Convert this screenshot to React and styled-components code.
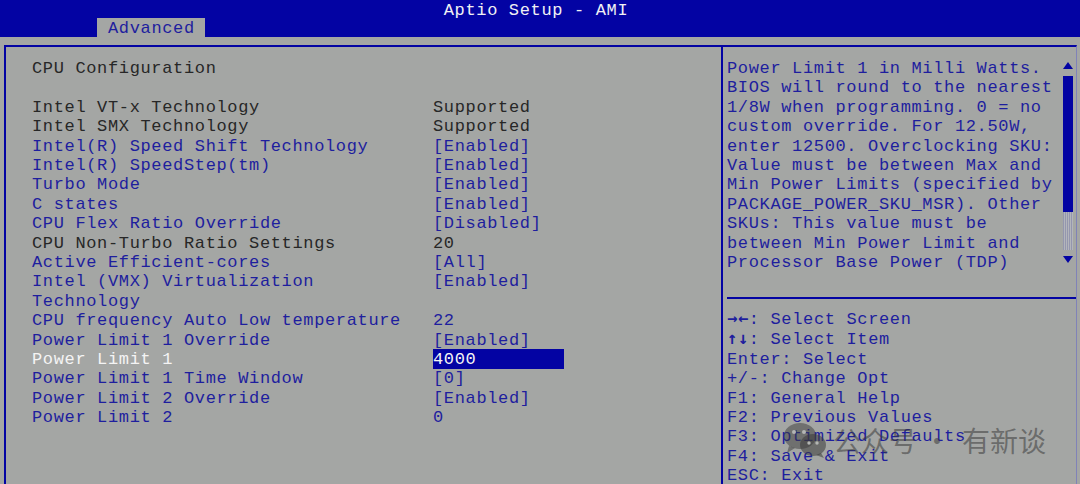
import React from 'react';
import styled, { createGlobalStyle } from 'styled-components';

const BLUE = '#0303a3';
const GREY = '#a4a6a4';
const INK = '#1e1e9e';
const DARK = '#272727';
const LINE = '19.4px';

const GlobalStyle = createGlobalStyle`
  html, body {
    margin: 0;
    padding: 0;
    background: ${GREY};
  }
  body {
    width: 1080px;
    height: 484px;
    overflow: hidden;
    font-family: "Liberation Mono", "DejaVu Sans Mono", monospace;
    font-size: 17px;
    letter-spacing: 0.65px;
  }
`;

const Screen = styled.div`
  position: relative;
  width: 1080px;
  height: 484px;
  display: flex;
  flex-direction: column;
  background: ${GREY};
`;

const TopBar = styled.header`
  height: 37px;
  background: ${BLUE};
  display: flex;
  flex-direction: column;
`;

const Title = styled.div`
  height: 18px;
  box-sizing: border-box;
  padding: 2px 8px 0 0;
  line-height: 18px;
  text-align: center;
  color: #f0f0f4;
`;

const Tabs = styled.nav`
  height: 19px;
  display: flex;
  padding-left: 97px;
`;

const Tab = styled.div`
  width: 108px;
  height: 19px;
  box-sizing: border-box;
  padding: 2px 0 0 11px;
  line-height: 18px;
  background: ${GREY};
  color: ${INK};
`;

const Frame = styled.main`
  flex: 1;
  min-height: 0;
  margin: 8px 3px 0 4px;
  display: grid;
  grid-template-columns: 717px 1fr;
  border-top: 2px solid ${BLUE};
  border-left: 2px solid ${BLUE};
  border-right: 1px solid #8082b8;
`;

const SettingsPanel = styled.section`
  box-sizing: border-box;
  padding: 12px 0 0 26px;
  border-right: 2px solid ${BLUE};
  line-height: ${LINE};
`;

const Heading = styled.div`
  color: ${DARK};
  margin-bottom: ${LINE};
`;

const SettingsGrid = styled.div`
  display: grid;
  grid-template-columns: 390px 140px;
  column-gap: 11px;
`;

const Label = styled.div`
  color: ${(p) => (p.$selected ? '#f4f4f4' : p.$static ? DARK : INK)};
`;

const Value = styled.div`
  justify-self: start;
  color: ${(p) => (p.$selected ? '#f4f4f4' : p.$static ? DARK : INK)};
  background: ${(p) => (p.$selected ? BLUE : 'transparent')};
  width: ${(p) => (p.$selected ? '131px' : 'auto')};
  height: ${LINE};
  margin-top: ${(p) => (p.$selected ? '-1px' : '0')};
  padding-top: ${(p) => (p.$selected ? '1px' : '0')};
`;

const HelpPanel = styled.aside`
  box-sizing: border-box;
  padding: 12px 0 0 4px;
  display: flex;
  flex-direction: column;
  line-height: ${LINE};
  color: ${INK};
`;

const HelpArea = styled.div`
  height: 238px;
  display: flex;
`;

const HelpText = styled.div`
  flex: 1;
`;

const Scrollbar = styled.div`
  width: 12px;
  margin: 3px 2px 0 0;
  display: flex;
  flex-direction: column;
  align-items: center;
`;

const Thumb = styled.div`
  width: 10px;
  height: 136px;
  margin-top: 7px;
  background: ${BLUE};
`;

const Track = styled.div`
  width: 10px;
  height: 38px;
  background: repeating-linear-gradient(
    90deg,
    #9496ae 0 1px,
    #b3b5bb 1px 2px
  );
`;

const Arrow = styled.svg`
  display: block;
  margin-top: ${(p) => p.$gap || 0}px;
`;

const Divider = styled.hr`
  margin: 0;
  height: 0;
  border: none;
  border-top: 2px solid ${BLUE};
`;

const KeyList = styled.div`
  padding-top: 10px;
`;

const KeyGlyph = styled.span`
  font-family: "DejaVu Sans Mono", monospace;
  font-weight: bold;
`;

const Watermark = styled.div`
  position: absolute;
  left: 783px;
  top: 421px;
  height: 38px;
  display: flex;
  align-items: center;
  font-family: "Noto Sans CJK SC", "Noto Sans", sans-serif;
  font-size: 28px;
  letter-spacing: 0;
  line-height: 28px;
  color: rgba(58, 58, 58, 0.55);
  pointer-events: none;
`;

const MarkText = styled.span`
  margin-left: ${(p) => p.$ml || 0}px;
`;

const settings = [
  { label: 'Intel VT-x Technology', value: 'Supported', fixed: true },
  { label: 'Intel SMX Technology', value: 'Supported', fixed: true },
  { label: 'Intel(R) Speed Shift Technology', value: '[Enabled]' },
  { label: 'Intel(R) SpeedStep(tm)', value: '[Enabled]' },
  { label: 'Turbo Mode', value: '[Enabled]' },
  { label: 'C states', value: '[Enabled]' },
  { label: 'CPU Flex Ratio Override', value: '[Disabled]' },
  { label: 'CPU Non-Turbo Ratio Settings', value: '20', fixed: true },
  { label: 'Active Efficient-cores', value: '[All]' },
  { label: 'Intel (VMX) Virtualization Technology', value: '[Enabled]' },
  { label: 'CPU frequency Auto Low temperature', value: '22' },
  { label: 'Power Limit 1 Override', value: '[Enabled]' },
  { label: 'Power Limit 1', value: '4000', selected: true },
  { label: 'Power Limit 1 Time Window', value: '[0]' },
  { label: 'Power Limit 2 Override', value: '[Enabled]' },
  { label: 'Power Limit 2', value: '0' },
];

const helpLines = [
  'Power Limit 1 in Milli Watts.',
  'BIOS will round to the nearest',
  '1/8W when programming. 0 = no',
  'custom override. For 12.50W,',
  'enter 12500. Overclocking SKU:',
  'Value must be between Max and',
  'Min Power Limits (specified by',
  'PACKAGE_POWER_SKU_MSR). Other',
  'SKUs: This value must be',
  'between Min Power Limit and',
  'Processor Base Power (TDP)',
];

const keys = [
  { glyph: '\u2192\u2190', text: ': Select Screen' },
  { glyph: '\u2191\u2193', text: ': Select Item' },
  { text: 'Enter: Select' },
  { text: '+/-: Change Opt' },
  { text: 'F1: General Help' },
  { text: 'F2: Previous Values' },
  { text: 'F3: Optimized Defaults' },
  { text: 'F4: Save & Exit' },
  { text: 'ESC: Exit' },
];

const WeChatLogo = () => (
  <svg width="46" height="38" viewBox="0 0 46 38">
    <ellipse cx="17" cy="15" rx="16" ry="13" fill="rgba(58,58,58,0.5)" />
    <path d="M6 25 L4 32 L12 27 Z" fill="rgba(58,58,58,0.5)" />
    <ellipse cx="30" cy="24" rx="13" ry="11" fill="rgba(58,58,58,0.55)" />
    <path d="M38 32 L41 37 L33 34 Z" fill="rgba(58,58,58,0.55)" />
    <circle cx="11" cy="11" r="2" fill="#b4b6b4" />
    <circle cx="21" cy="11" r="2" fill="#b4b6b4" />
    <circle cx="26" cy="22" r="1.7" fill="#b4b6b4" />
    <circle cx="34" cy="22" r="1.7" fill="#b4b6b4" />
  </svg>
);

export default function App() {
  return (
    <Screen>
      <GlobalStyle />
      <TopBar>
        <Title>Aptio Setup - AMI</Title>
        <Tabs>
          <Tab>Advanced</Tab>
        </Tabs>
      </TopBar>

      <Frame>
        <SettingsPanel>
          <Heading>CPU Configuration</Heading>
          <SettingsGrid>
            {settings.map((s) => (
              <React.Fragment key={s.label}>
                <Label $static={s.fixed} $selected={s.selected}>
                  {s.label}
                </Label>
                <Value $static={s.fixed} $selected={s.selected}>
                  {s.value}
                </Value>
              </React.Fragment>
            ))}
          </SettingsGrid>
        </SettingsPanel>

        <HelpPanel>
          <HelpArea>
            <HelpText>
              {helpLines.map((l) => (
                <div key={l}>{l}</div>
              ))}
            </HelpText>
            <Scrollbar>
              <Arrow width="10" height="7" viewBox="0 0 10 7">
                <path d="M5 0 L10 7 L0 7 Z" fill={BLUE} />
              </Arrow>
              <Thumb />
              <Track />
              <Arrow width="10" height="7" viewBox="0 0 10 7" $gap={6}>
                <path d="M0 0 L10 0 L5 7 Z" fill={BLUE} />
              </Arrow>
            </Scrollbar>
          </HelpArea>
          <Divider />
          <KeyList>
            {keys.map((k) => (
              <div key={k.text}>
                {k.glyph && <KeyGlyph>{k.glyph}</KeyGlyph>}
                {k.text}
              </div>
            ))}
          </KeyList>
        </HelpPanel>
      </Frame>

      <Watermark>
        <WeChatLogo />
        <MarkText $ml={4}>公众号</MarkText>
        <MarkText $ml={6}>·</MarkText>
        <MarkText $ml={11}>有新谈</MarkText>
      </Watermark>
    </Screen>
  );
}
